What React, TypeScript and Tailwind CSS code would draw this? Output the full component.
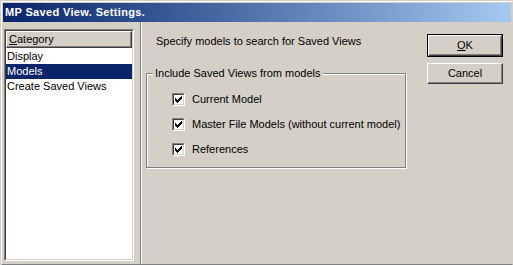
import type { ReactNode } from 'react';

const font = { fontFamily: "'Liberation Sans', Arial, sans-serif" };

const categories = ['Display', 'Models', 'Create Saved Views'];
const selected = 'Models';

const options = [
  'Current Model',
  'Master File Models (without current model)',
  'References',
];

function Checkbox({ label }: { label: string }) {
  return (
    <label className="flex items-center gap-[7px] h-[13px]">
      <span className="w-[13px] h-[13px] border border-t-[#808080] border-l-[#808080] border-b-white border-r-white flex">
        <span className="flex-1 bg-white border border-t-[#404040] border-l-[#404040] border-b-[#d4d0c8] border-r-[#d4d0c8] flex items-center justify-center">
          <svg width="7" height="7" viewBox="0 0 7 7" shapeRendering="crispEdges">
            <path d="M0 2h1v3h-1zM1 3h1v3h-1zM2 4h1v3h-1zM3 3h1v3h-1zM4 2h1v3h-1zM5 1h1v3h-1zM6 0h1v3h-1z" fill="#000" />
          </svg>
        </span>
      </span>
      <span className="text-[11px] leading-[13px] text-black">{label}</span>
    </label>
  );
}

function Button({ children, isDefault }: { children: ReactNode; isDefault?: boolean }) {
  return (
    <div className={isDefault ? 'border border-black' : ''}>
      <div className="border border-t-white border-l-white border-b-[#404040] border-r-[#404040]">
        <div className="border border-t-[#d4d0c8] border-l-[#d4d0c8] border-b-[#808080] border-r-[#808080] h-[19px] flex items-center justify-center text-[11px] text-black">
          {children}
        </div>
      </div>
    </div>
  );
}

export default function App() {
  return (
    <div
      className="w-[513px] h-[265px] bg-[#d4d0c8] border-t border-l border-t-[#d4d0c8] border-l-[#d4d0c8] flex flex-col overflow-hidden"
      style={font}
    >
      <div className="flex-1 flex flex-col border border-t-white border-l-white border-b-[#808080] border-r-[#d4d0c8] px-px pt-px">
        {/* title bar */}
        <div className="h-[19px] flex items-center pl-[2px] bg-gradient-to-r from-[#0a246a] to-[#a6caf0]">
          <span className="text-white text-[11px] font-bold tracking-[0.35px]">MP Saved View. Settings.</span>
        </div>

        <div className="flex-1 flex min-h-0">
          {/* category list */}
          <div className="pl-px pt-[7px] w-[137px]">
            <div className="w-[130px] h-[232px] border border-t-[#808080] border-l-[#808080] border-b-white border-r-white">
              <div className="h-full border border-t-[#404040] border-l-[#404040] border-b-[#d4d0c8] border-r-[#d4d0c8] bg-white flex flex-col">
                <div className="h-[17px] border border-t-white border-l-white border-b-[#404040] border-r-[#404040] bg-[#d4d0c8]">
                  <div className="h-full border-b border-r border-b-[#808080] border-r-[#808080] pl-[2px] text-[11px] leading-[14px] text-black">
                    <span className="underline">C</span>ategory
                  </div>
                </div>
                <div className="pt-[1px]">
                  {categories.map((c) => (
                    <div
                      key={c}
                      className={`h-[15px] pl-px text-[11px] leading-[15px] ${
                        c === selected ? 'bg-[#0a246a] text-white' : 'text-black'
                      }`}
                    >
                      {c}
                    </div>
                  ))}
                </div>
              </div>
            </div>
          </div>

          {/* separator */}
          <div className="w-[2px] border-l border-r border-l-[#808080] border-r-white" />

          {/* settings page */}
          <div className="flex-1 flex pl-[4px]">
            <div className="w-[260px] pt-[13px]">
              <div className="pl-[10px] text-[11px] leading-[13px] text-black">
                Specify models to search for Saved Views
              </div>
              <fieldset className="mt-[19px] h-[101px] border border-[#808080] shadow-[inset_1px_1px_0_#fff,1px_1px_0_#fff]">
                <legend className="ml-[6px] px-[2px] text-[11px] leading-[13px] text-black bg-[#d4d0c8]">
                  Include Saved Views from models
                </legend>
                <div className="flex flex-col gap-[12px] pl-[25px] pt-[13px]">
                  {options.map((o) => (
                    <Checkbox key={o} label={o} />
                  ))}
                </div>
              </fieldset>
            </div>
            <div className="ml-[21px] pt-[12px] w-[76px] flex flex-col gap-[6px]">
              <Button isDefault>
                <span className="underline">O</span>K
              </Button>
              <Button>Cancel</Button>
            </div>
          </div>
        </div>
      </div>
    </div>
  );
}
